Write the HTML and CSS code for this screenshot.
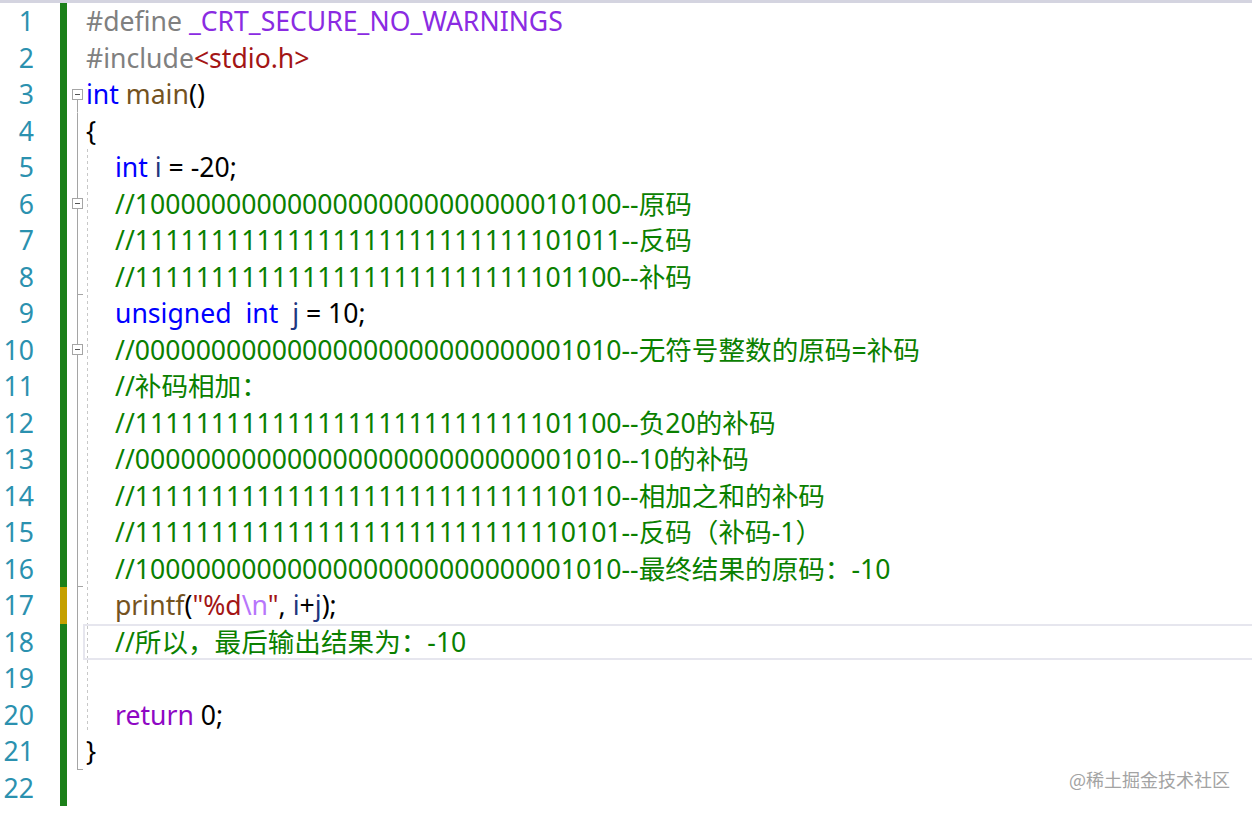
FILE: index.html
```html
<!DOCTYPE html>
<html lang="zh-CN">
<head>
    <meta charset="UTF-8">
    <title>main.c</title>
    <link rel="stylesheet" href="styles.css">
</head>
<body>
    <div class="topbar"></div>
    <main class="editor">
        <div class="row">
            <span class="ln">1</span><span class="mark"></span><span class="fold"></span>
            <span class="code"><span class="pp">#define </span><span class="macro">_CRT_SECURE_NO_WARNINGS</span></span>
        </div>
        <div class="row">
            <span class="ln">2</span><span class="mark"></span><span class="fold"></span>
            <span class="code"><span class="pp">#include</span><span class="str">&lt;stdio.h&gt;</span></span>
        </div>
        <div class="row">
            <span class="ln">3</span><span class="mark"></span><span class="fold open"><svg class="box" width="11" height="11" viewBox="0 0 11 11"><rect x="0.5" y="0.5" width="10" height="10" fill="#fff" stroke="#a5a5a5"/><path d="M3 5.5h5" stroke="#555" stroke-width="1"/></svg></span>
            <span class="code"><span class="kw">int</span> <span class="fn">main</span>()</span>
        </div>
        <div class="row">
            <span class="ln">4</span><span class="mark"></span><span class="fold mid"></span>
            <span class="code">{</span>
        </div>
        <div class="row">
            <span class="ln">5</span><span class="mark"></span><span class="fold mid"></span>
            <span class="code guide"><span class="in"><span class="kw">int</span> <span class="var">i</span> = -20;</span></span>
        </div>
        <div class="row">
            <span class="ln">6</span><span class="mark"></span><span class="fold mid"><svg class="box" width="11" height="11" viewBox="0 0 11 11"><rect x="0.5" y="0.5" width="10" height="10" fill="#fff" stroke="#a5a5a5"/><path d="M3 5.5h5" stroke="#555" stroke-width="1"/></svg></span>
            <span class="code guide"><span class="in cm">//10000000000000000000000000010100--原码</span></span>
        </div>
        <div class="row">
            <span class="ln">7</span><span class="mark"></span><span class="fold mid"></span>
            <span class="code guide"><span class="in cm">//11111111111111111111111111101011--反码</span></span>
        </div>
        <div class="row">
            <span class="ln">8</span><span class="mark"></span><span class="fold mid end"></span>
            <span class="code guide"><span class="in cm">//11111111111111111111111111101100--补码</span></span>
        </div>
        <div class="row">
            <span class="ln">9</span><span class="mark"></span><span class="fold mid"></span>
            <span class="code guide"><span class="in"><span class="kw">unsigned  int</span>  <span class="var">j</span> = 10;</span></span>
        </div>
        <div class="row">
            <span class="ln">10</span><span class="mark"></span><span class="fold mid"><svg class="box" width="11" height="11" viewBox="0 0 11 11"><rect x="0.5" y="0.5" width="10" height="10" fill="#fff" stroke="#a5a5a5"/><path d="M3 5.5h5" stroke="#555" stroke-width="1"/></svg></span>
            <span class="code guide"><span class="in cm">//00000000000000000000000000001010--无符号整数的原码=补码</span></span>
        </div>
        <div class="row">
            <span class="ln">11</span><span class="mark"></span><span class="fold mid"></span>
            <span class="code guide"><span class="in cm">//补码相加：</span></span>
        </div>
        <div class="row">
            <span class="ln">12</span><span class="mark"></span><span class="fold mid"></span>
            <span class="code guide"><span class="in cm">//11111111111111111111111111101100--负20的补码</span></span>
        </div>
        <div class="row">
            <span class="ln">13</span><span class="mark"></span><span class="fold mid"></span>
            <span class="code guide"><span class="in cm">//00000000000000000000000000001010--10的补码</span></span>
        </div>
        <div class="row">
            <span class="ln">14</span><span class="mark"></span><span class="fold mid"></span>
            <span class="code guide"><span class="in cm">//11111111111111111111111111110110--相加之和的补码</span></span>
        </div>
        <div class="row">
            <span class="ln">15</span><span class="mark"></span><span class="fold mid"></span>
            <span class="code guide"><span class="in cm">//11111111111111111111111111110101--反码（补码-1）</span></span>
        </div>
        <div class="row">
            <span class="ln">16</span><span class="mark"></span><span class="fold mid end"></span>
            <span class="code guide"><span class="in cm">//10000000000000000000000000001010--最终结果的原码：-10</span></span>
        </div>
        <div class="row">
            <span class="ln">17</span><span class="mark edited"></span><span class="fold mid"></span>
            <span class="code guide"><span class="in"><span class="fn">printf</span>(<span class="str">"%d</span><span class="esc">\n</span><span class="str">"</span>, <span class="var">i</span>+<span class="var">j</span>);</span></span>
        </div>
        <div class="row">
            <span class="ln">18</span><span class="mark"></span><span class="fold mid"></span>
            <span class="code guide current"><span class="in cm">//所以，最后输出结果为：-10</span></span>
        </div>
        <div class="row">
            <span class="ln">19</span><span class="mark"></span><span class="fold mid"></span>
            <span class="code guide"></span>
        </div>
        <div class="row">
            <span class="ln">20</span><span class="mark"></span><span class="fold mid"></span>
            <span class="code guide"><span class="in"><span class="ret">return</span> 0;</span></span>
        </div>
        <div class="row">
            <span class="ln">21</span><span class="mark"></span><span class="fold mid end"></span>
            <span class="code">}</span>
        </div>
        <div class="row">
            <span class="ln">22</span><span class="mark"></span><span class="fold"></span>
            <span class="code"></span>
        </div>
    </main>
    <div class="watermark">@稀土掘金技术社区</div>
</body>
</html>
```

FILE: styles.css
```css
:root {
    --line-num: #2b91af;
    --bar-green: #1b8019;
    --bar-yellow: #c4a000;
    --fold-grey: #a5a5a5;
    --current: #e6e6ee;
}

* {
    box-sizing: border-box;
    margin: 0;
    padding: 0;
}

body {
    background: #fff;
    font-family: "Noto Sans", "Noto Sans CJK SC", sans-serif;
    font-size: 26.6px;
    color: #000;
    width: 1252px;
    height: 813px;
    overflow: hidden;
    position: relative;
}

.topbar {
    height: 3px;
    background: #d4d4e0;
}

.editor {
    display: flex;
    flex-direction: column;
}

.row {
    display: flex;
    height: 36.5px;
    line-height: 36.5px;
    white-space: pre;
}

.ln {
    width: 34px;
    text-align: right;
    color: var(--line-num);
    margin-right: 26px;
}

.mark {
    width: 7px;
    background: var(--bar-green);
}

.mark.edited {
    background: var(--bar-yellow);
}

.fold {
    width: 16px;
    display: flex;
    align-items: center;
    padding-left: 5px;
}

.fold.open {
    background: linear-gradient(var(--fold-grey), var(--fold-grey)) no-repeat 10px 100% / 1px 50%;
}

.fold.mid {
    background: linear-gradient(var(--fold-grey), var(--fold-grey)) no-repeat 10px 0 / 1px 100%;
}

.fold.end {
    background:
        linear-gradient(var(--fold-grey), var(--fold-grey)) no-repeat 10px 0 / 1px 100%,
        linear-gradient(var(--fold-grey), var(--fold-grey)) no-repeat 10px 100% / 6px 1px;
}

.box {
    display: block;
}

.code {
    flex: 1;
    padding-left: 3px;
}

.code.guide {
    background: repeating-linear-gradient(to bottom, #c8c8c8 0 3px, transparent 3px 6px) no-repeat 4px 0 / 1px 100%;
}

.code.current {
    border: 2px solid var(--current);
    border-right: none;
    padding-left: 1px;
    line-height: 32.5px;
    background-position: 2px 0;
}

.in {
    padding-left: 29px;
}

.pp { color: #808080; }
.macro { color: #8a2be2; }
.str { color: #a31515; }
.kw { color: #0000ff; }
.fn { color: #74531f; }
.var { color: #1f377f; }
.cm { color: #0a8000; }
.ret { color: #8f08c4; }
.esc { color: #b776fb; }

.watermark {
    position: absolute;
    right: 22px;
    bottom: 21px;
    font-family: "Noto Sans CJK SC", sans-serif;
    font-size: 18px;
    color: #a3a3a3;
}
```
